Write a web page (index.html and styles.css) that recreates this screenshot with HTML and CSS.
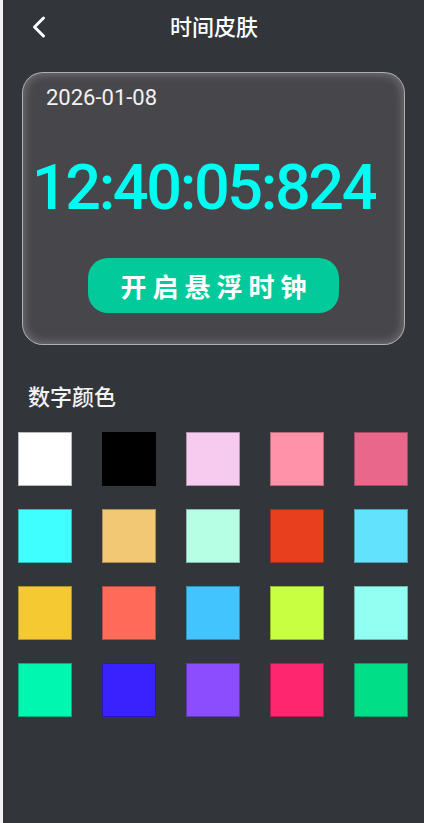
FILE: index.html
```html
<!DOCTYPE html>
<html lang="zh">
<head>
<meta charset="utf-8">
<title>时间皮肤</title>
<link rel="stylesheet" href="styles.css">
</head>
<body>
<div class="screen">
  <header class="header">
    <svg class="back" width="16" height="24" viewBox="0 0 16 24"><polyline points="12.5,3 3.5,12 12.5,21" fill="none" stroke="#ffffff" stroke-width="3" stroke-linecap="round" stroke-linejoin="round"/></svg>
    <div class="title">时间皮肤</div>
  </header>
  <section class="card">
    <div class="date">2026-01-08</div>
    <div class="time">12:40:05:824</div>
    <div class="btn-row"><div class="btn">开启悬浮时钟</div></div>
  </section>
  <div class="section-title">数字颜色</div>
  <div class="grid">
    <div class="sw" style="background:#ffffff"></div>
    <div class="sw" style="background:#000000"></div>
    <div class="sw" style="background:#f7caf0"></div>
    <div class="sw" style="background:#ff92a9"></div>
    <div class="sw" style="background:#e8678a"></div>
    <div class="sw" style="background:#40ffff"></div>
    <div class="sw" style="background:#f2c874"></div>
    <div class="sw" style="background:#b6ffe4"></div>
    <div class="sw" style="background:#e8401f"></div>
    <div class="sw" style="background:#62e2fc"></div>
    <div class="sw" style="background:#f5c932"></div>
    <div class="sw" style="background:#ff6b58"></div>
    <div class="sw" style="background:#42c4ff"></div>
    <div class="sw" style="background:#c9ff41"></div>
    <div class="sw" style="background:#92fff2"></div>
    <div class="sw" style="background:#00f7b0"></div>
    <div class="sw" style="background:#3a22ff"></div>
    <div class="sw" style="background:#8b4dff"></div>
    <div class="sw" style="background:#ff2670"></div>
    <div class="sw" style="background:#00df88"></div>
  </div>
</div>
</body>
</html>
```
FILE: styles.css
```css
html, body {
  margin: 0;
  padding: 0;
  background: #f2f2f2;
}
body {
  font-family: Roboto, "Noto Sans CJK SC", sans-serif;
  color: #ffffff;
}
.screen {
  margin-left: 3px;
  width: 421px;
  height: 823px;
  background: #32363b;
  overflow: hidden;
}
.header {
  height: 58px;
  display: flex;
  align-items: center;
  justify-content: center;
  position: relative;
}
.back {
  position: absolute;
  left: 28px;
  top: 15px;
}
.title {
  font-family: "Noto Sans CJK SC", sans-serif;
  font-size: 22px;
  font-weight: 500;
  color: #ffffff;
  padding-left: 1px;
  margin-top: -8px;
}
.card {
  margin: 14px 19px 0 19px;
  height: 273px;
  box-sizing: border-box;
  border-radius: 21px;
  background: #47474b;
  border: 1.5px solid rgba(210, 210, 212, 0.75);
  box-shadow: inset 0 0 9px 2px rgba(255, 255, 255, 0.22);
  padding: 11px 0 0 0;
}
.date {
  font-family: Roboto, sans-serif;
  font-size: 22px;
  color: #f2f2f2;
  padding-left: 23px;
  line-height: 28px;
}
.time {
  font-family: Roboto, sans-serif;
  font-size: 63px;
  font-weight: 500;
  letter-spacing: -2.4px;
  color: #00fdf1;
  text-align: center;
  line-height: 74px;
  margin-top: 39px;
  padding-right: 20px;
}
.btn-row {
  display: flex;
  justify-content: center;
  margin-top: 33px;
}
.btn {
  width: 251px;
  height: 55px;
  border-radius: 20px;
  background: #02ca9a;
  display: flex;
  align-items: center;
  justify-content: center;
  font-family: "Noto Sans CJK SC", sans-serif;
  font-weight: 700;
  font-size: 26px;
  letter-spacing: 6px;
  padding-left: 6px;
  box-sizing: border-box;
  color: #ffffff;
}
.section-title {
  font-family: "Noto Sans CJK SC", sans-serif;
  font-size: 22px;
  font-weight: 500;
  color: #f4f4f4;
  margin: 34px 0 0 25px;
  line-height: 32px;
}
.grid {
  display: grid;
  grid-template-columns: repeat(5, 54px);
  column-gap: 30px;
  row-gap: 23px;
  padding-left: 15px;
  margin-top: 21px;
}
.sw {
  width: 54px;
  height: 54px;
  box-sizing: border-box;
  border: 1px solid rgba(0, 0, 0, 0.28);
}
```
